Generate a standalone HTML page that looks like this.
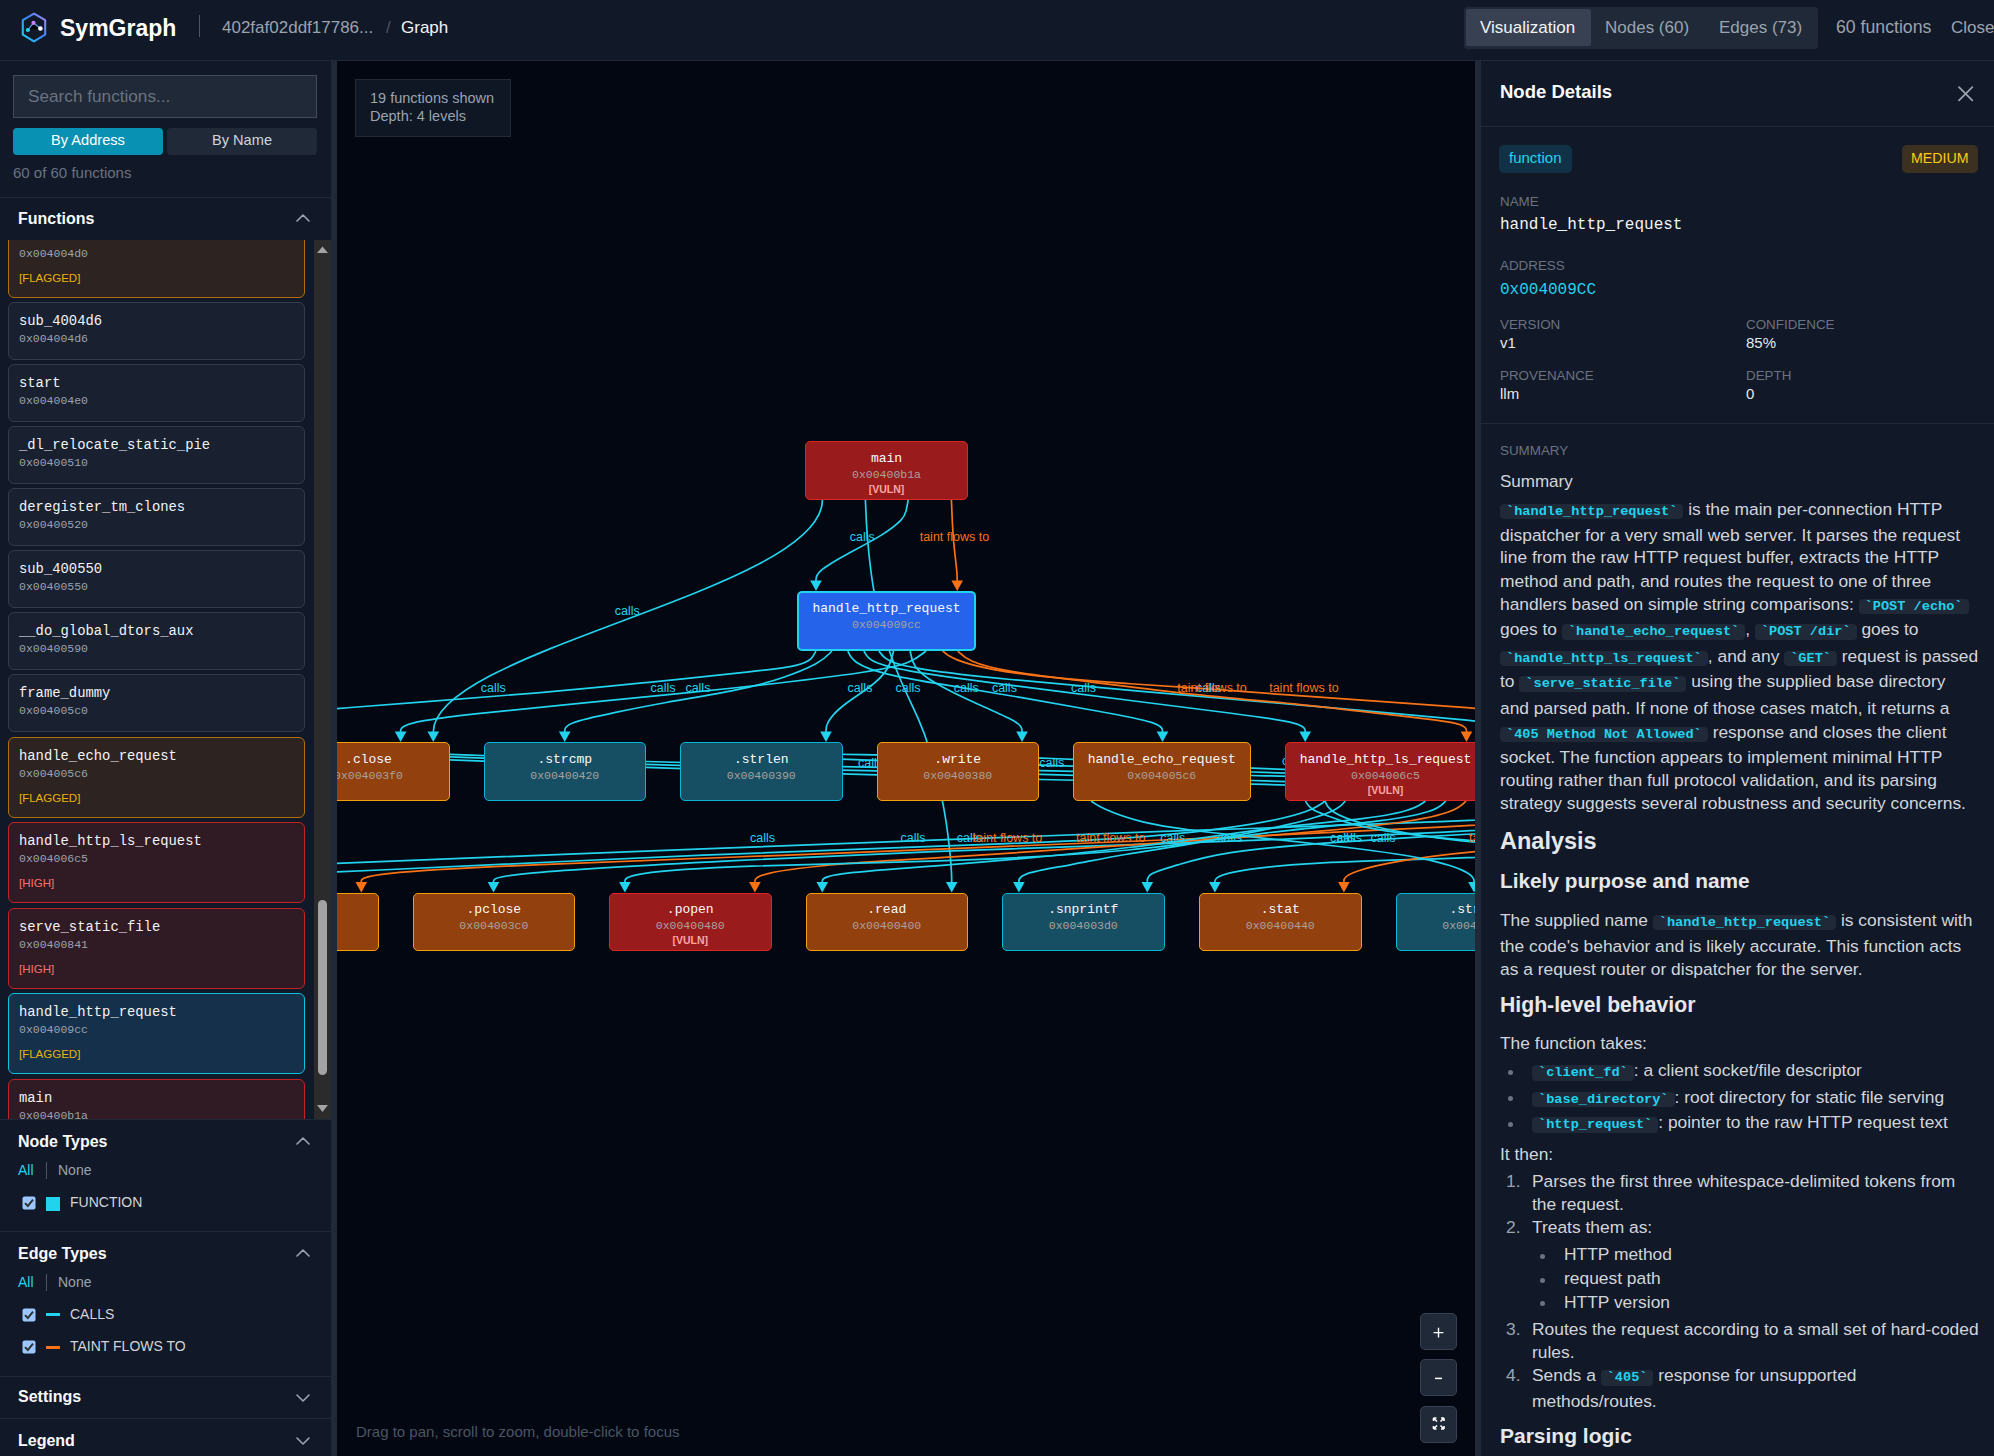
<!DOCTYPE html>
<html><head><meta charset="utf-8"><title>SymGraph</title>
<style>
html,body{margin:0;padding:0;width:1994px;height:1456px;overflow:hidden;background:#111827;}
.t{position:absolute;white-space:nowrap;}
.r{position:absolute;}
</style></head><body>
<div class="r" style="left:0px;top:0px;width:1994px;height:60px;background:#111827;"></div>
<div class="r" style="left:0px;top:60px;width:1994px;height:1px;background:#1f2937;"></div>
<div class="r" style="left:0px;top:61px;width:331px;height:1395px;background:#111827;"></div>
<div class="r" style="left:331px;top:61px;width:6px;height:1395px;background:#1f2937;"></div>
<div class="r" style="left:337px;top:61px;width:1138px;height:1395px;background:#030712;"></div>
<div class="r" style="left:1475px;top:61px;width:6px;height:1395px;background:#1f2937;"></div>
<div class="r" style="left:1481px;top:61px;width:513px;height:1395px;background:#111827;"></div>
<svg class="r" style="left:18px;top:10px;width:32px;height:36px" viewBox="18 10 32 36">
<defs><linearGradient id="lg" x1="0" y1="1" x2="1" y2="0"><stop offset="0" stop-color="#22d3ee"/><stop offset="0.55" stop-color="#3b82f6"/><stop offset="1" stop-color="#a78bfa"/></linearGradient></defs>
<path d="M34 13.6 L45.2 20.2 L45.2 34.6 L34 41.4 L22.8 34.6 L22.8 20.2 Z" fill="none" stroke="url(#lg)" stroke-width="2.1" stroke-linejoin="round"/>
<path d="M27.9 30 L33.5 22.8 L40.4 28.5 Z" fill="#000" opacity="0.9"/>
<path d="M27.9 30 L33.5 22.8 L40.4 28.5" fill="none" stroke="#60a5fa" stroke-width="1.1"/>
<circle cx="33.5" cy="22.8" r="2.1" fill="#c084fc"/>
<circle cx="27.9" cy="30" r="2.1" fill="#22d3ee"/>
<circle cx="40.4" cy="28.5" r="2.3" fill="#ffffff"/>
</svg>
<div class="t" style="left:60px;top:14px;font-size:23px;line-height:28px;color:#ffffff;font-family:'Liberation Sans', sans-serif;font-weight:700;">SymGraph</div>
<div class="r" style="left:199px;top:15px;width:1px;height:22px;background:#4b5563;"></div>
<div class="t" style="left:222px;top:17px;font-size:17px;line-height:22px;color:#9ca3af;font-family:'Liberation Sans', sans-serif;">402faf02ddf17786...</div>
<div class="t" style="left:386px;top:17px;font-size:17px;line-height:22px;color:#4b5563;font-family:'Liberation Sans', sans-serif;">/</div>
<div class="t" style="left:401px;top:17px;font-size:17px;line-height:22px;color:#f3f4f6;font-family:'Liberation Sans', sans-serif;">Graph</div>
<div class="r" style="left:1464px;top:7px;width:354px;height:42px;background:#1f2937;border-radius:3px;"></div>
<div class="r" style="left:1466px;top:9px;width:125px;height:37px;background:#374151;border-radius:2px;"></div>
<div class="t" style="left:1480px;top:17px;font-size:17px;line-height:22px;color:#f3f4f6;font-family:'Liberation Sans', sans-serif;">Visualization</div>
<div class="t" style="left:1605px;top:17px;font-size:17px;line-height:22px;color:#9ca3af;font-family:'Liberation Sans', sans-serif;">Nodes (60)</div>
<div class="t" style="left:1719px;top:17px;font-size:17px;line-height:22px;color:#9ca3af;font-family:'Liberation Sans', sans-serif;">Edges (73)</div>
<div class="t" style="left:1836px;top:16px;font-size:17.7px;line-height:22px;color:#9ca3af;font-family:'Liberation Sans', sans-serif;">60 functions</div>
<div class="t" style="left:1951px;top:17px;font-size:17px;line-height:22px;color:#9ca3af;font-family:'Liberation Sans', sans-serif;">Close</div>
<div class="r" style="left:13px;top:75px;width:304px;height:43px;background:#1f2937;border:1px solid #424b59;box-sizing:border-box;"></div>
<div class="t" style="left:28px;top:85px;font-size:17.2px;line-height:22px;color:#6b7280;font-family:'Liberation Sans', sans-serif;">Search functions...</div>
<div class="r" style="left:13px;top:128px;width:150px;height:27px;background:#0891b2;border-radius:4px;"></div>
<div class="t" style="left:13px;top:131px;font-size:14.6px;line-height:18px;color:#ffffff;font-family:'Liberation Sans', sans-serif;width:150px;text-align:center;">By Address</div>
<div class="r" style="left:167px;top:128px;width:150px;height:27px;background:#1f2937;border-radius:4px;"></div>
<div class="t" style="left:167px;top:131px;font-size:14.6px;line-height:18px;color:#d1d5db;font-family:'Liberation Sans', sans-serif;width:150px;text-align:center;">By Name</div>
<div class="t" style="left:13px;top:163px;font-size:15px;line-height:19px;color:#6b7280;font-family:'Liberation Sans', sans-serif;">60 of 60 functions</div>
<div class="r" style="left:0px;top:197px;width:331px;height:1px;background:#1f2937;"></div>
<div class="t" style="left:18px;top:209px;font-size:16px;line-height:20px;color:#f9fafb;font-family:'Liberation Sans', sans-serif;font-weight:700;">Functions</div>
<svg class="r" style="left:296px;top:214px;width:14px;height:8px" viewBox="0 0 14 8"><path d="M1 7 L7 1 L13 7" fill="none" stroke="#9ca3af" stroke-width="1.6" stroke-linecap="round" stroke-linejoin="round"/></svg>
<div class="r" style="left:0;top:240px;width:314px;height:879px;overflow:hidden"><div class="r" style="left:8px;top:-23px;width:297px;height:81px;background:#2d2321;border:1px solid #b26e0d;border-radius:6px;box-sizing:border-box;"></div><div class="t" style="left:19px;top:6px;font-size:11.5px;line-height:15px;color:#9ca3af;font-family:'Liberation Mono', monospace;">0x004004d0</div><div class="t" style="left:19px;top:31px;font-size:11.5px;line-height:15px;color:#eab308;font-family:'Liberation Sans', sans-serif;">[FLAGGED]</div><div class="r" style="left:8px;top:62px;width:297px;height:58px;background:#192030;border:1px solid #323c4c;border-radius:6px;box-sizing:border-box;"></div><div class="t" style="left:19px;top:71px;font-size:13.85px;line-height:20px;color:#f3f4f6;font-family:'Liberation Mono', monospace;">sub_4004d6</div><div class="t" style="left:19px;top:91px;font-size:11.5px;line-height:15px;color:#9ca3af;font-family:'Liberation Mono', monospace;">0x004004d6</div><div class="r" style="left:8px;top:124px;width:297px;height:58px;background:#192030;border:1px solid #323c4c;border-radius:6px;box-sizing:border-box;"></div><div class="t" style="left:19px;top:133px;font-size:13.85px;line-height:20px;color:#f3f4f6;font-family:'Liberation Mono', monospace;">start</div><div class="t" style="left:19px;top:153px;font-size:11.5px;line-height:15px;color:#9ca3af;font-family:'Liberation Mono', monospace;">0x004004e0</div><div class="r" style="left:8px;top:186px;width:297px;height:58px;background:#192030;border:1px solid #323c4c;border-radius:6px;box-sizing:border-box;"></div><div class="t" style="left:19px;top:195px;font-size:13.85px;line-height:20px;color:#f3f4f6;font-family:'Liberation Mono', monospace;">_dl_relocate_static_pie</div><div class="t" style="left:19px;top:215px;font-size:11.5px;line-height:15px;color:#9ca3af;font-family:'Liberation Mono', monospace;">0x00400510</div><div class="r" style="left:8px;top:248px;width:297px;height:58px;background:#192030;border:1px solid #323c4c;border-radius:6px;box-sizing:border-box;"></div><div class="t" style="left:19px;top:257px;font-size:13.85px;line-height:20px;color:#f3f4f6;font-family:'Liberation Mono', monospace;">deregister_tm_clones</div><div class="t" style="left:19px;top:277px;font-size:11.5px;line-height:15px;color:#9ca3af;font-family:'Liberation Mono', monospace;">0x00400520</div><div class="r" style="left:8px;top:310px;width:297px;height:58px;background:#192030;border:1px solid #323c4c;border-radius:6px;box-sizing:border-box;"></div><div class="t" style="left:19px;top:319px;font-size:13.85px;line-height:20px;color:#f3f4f6;font-family:'Liberation Mono', monospace;">sub_400550</div><div class="t" style="left:19px;top:339px;font-size:11.5px;line-height:15px;color:#9ca3af;font-family:'Liberation Mono', monospace;">0x00400550</div><div class="r" style="left:8px;top:372px;width:297px;height:58px;background:#192030;border:1px solid #323c4c;border-radius:6px;box-sizing:border-box;"></div><div class="t" style="left:19px;top:381px;font-size:13.85px;line-height:20px;color:#f3f4f6;font-family:'Liberation Mono', monospace;">__do_global_dtors_aux</div><div class="t" style="left:19px;top:401px;font-size:11.5px;line-height:15px;color:#9ca3af;font-family:'Liberation Mono', monospace;">0x00400590</div><div class="r" style="left:8px;top:434px;width:297px;height:58px;background:#192030;border:1px solid #323c4c;border-radius:6px;box-sizing:border-box;"></div><div class="t" style="left:19px;top:443px;font-size:13.85px;line-height:20px;color:#f3f4f6;font-family:'Liberation Mono', monospace;">frame_dummy</div><div class="t" style="left:19px;top:463px;font-size:11.5px;line-height:15px;color:#9ca3af;font-family:'Liberation Mono', monospace;">0x004005c0</div><div class="r" style="left:8px;top:497px;width:297px;height:81px;background:#2d2321;border:1px solid #b26e0d;border-radius:6px;box-sizing:border-box;"></div><div class="t" style="left:19px;top:506px;font-size:13.85px;line-height:20px;color:#f3f4f6;font-family:'Liberation Mono', monospace;">handle_echo_request</div><div class="t" style="left:19px;top:526px;font-size:11.5px;line-height:15px;color:#9ca3af;font-family:'Liberation Mono', monospace;">0x004005c6</div><div class="t" style="left:19px;top:551px;font-size:11.5px;line-height:15px;color:#eab308;font-family:'Liberation Sans', sans-serif;">[FLAGGED]</div><div class="r" style="left:8px;top:582px;width:297px;height:81px;background:#301a24;border:1px solid #c02424;border-radius:6px;box-sizing:border-box;"></div><div class="t" style="left:19px;top:591px;font-size:13.85px;line-height:20px;color:#f3f4f6;font-family:'Liberation Mono', monospace;">handle_http_ls_request</div><div class="t" style="left:19px;top:611px;font-size:11.5px;line-height:15px;color:#9ca3af;font-family:'Liberation Mono', monospace;">0x004006c5</div><div class="t" style="left:19px;top:636px;font-size:11.5px;line-height:15px;color:#f87171;font-family:'Liberation Sans', sans-serif;">[HIGH]</div><div class="r" style="left:8px;top:668px;width:297px;height:81px;background:#301a24;border:1px solid #c02424;border-radius:6px;box-sizing:border-box;"></div><div class="t" style="left:19px;top:677px;font-size:13.85px;line-height:20px;color:#f3f4f6;font-family:'Liberation Mono', monospace;">serve_static_file</div><div class="t" style="left:19px;top:697px;font-size:11.5px;line-height:15px;color:#9ca3af;font-family:'Liberation Mono', monospace;">0x00400841</div><div class="t" style="left:19px;top:722px;font-size:11.5px;line-height:15px;color:#f87171;font-family:'Liberation Sans', sans-serif;">[HIGH]</div><div class="r" style="left:8px;top:753px;width:297px;height:81px;background:#14304a;border:1px solid #0ec3e0;border-radius:6px;box-sizing:border-box;"></div><div class="t" style="left:19px;top:762px;font-size:13.85px;line-height:20px;color:#f3f4f6;font-family:'Liberation Mono', monospace;">handle_http_request</div><div class="t" style="left:19px;top:782px;font-size:11.5px;line-height:15px;color:#9ca3af;font-family:'Liberation Mono', monospace;">0x004009cc</div><div class="t" style="left:19px;top:807px;font-size:11.5px;line-height:15px;color:#eab308;font-family:'Liberation Sans', sans-serif;">[FLAGGED]</div><div class="r" style="left:8px;top:839px;width:297px;height:81px;background:#301a24;border:1px solid #c02424;border-radius:6px;box-sizing:border-box;"></div><div class="t" style="left:19px;top:848px;font-size:13.85px;line-height:20px;color:#f3f4f6;font-family:'Liberation Mono', monospace;">main</div><div class="t" style="left:19px;top:868px;font-size:11.5px;line-height:15px;color:#9ca3af;font-family:'Liberation Mono', monospace;">0x00400b1a</div><div class="t" style="left:19px;top:893px;font-size:11.5px;line-height:15px;color:#f87171;font-family:'Liberation Sans', sans-serif;">[HIGH]</div></div>
<div class="r" style="left:314px;top:240px;width:17px;height:879px;background:#2b2b2b;"></div>
<svg class="r" style="left:314px;top:240px;width:17px;height:879px" viewBox="0 0 17 879"><path d="M3 13 L8.5 6.6 L14 13 Z" fill="#a3a3a3"/><path d="M3 865 L8.5 872 L14 865 Z" fill="#a3a3a3"/><rect x="4" y="660" width="9" height="175" rx="4.5" fill="#a3a3a3"/></svg>
<div class="r" style="left:0px;top:1119px;width:331px;height:1px;background:#1f2937;"></div>
<div class="t" style="left:18px;top:1132px;font-size:16px;line-height:20px;color:#f9fafb;font-family:'Liberation Sans', sans-serif;font-weight:700;">Node Types</div>
<svg class="r" style="left:296px;top:1137px;width:14px;height:8px" viewBox="0 0 14 8"><path d="M1 7 L7 1 L13 7" fill="none" stroke="#9ca3af" stroke-width="1.6" stroke-linecap="round" stroke-linejoin="round"/></svg>
<div class="t" style="left:18px;top:1161px;font-size:14px;line-height:18px;color:#22d3ee;font-family:'Liberation Sans', sans-serif;">All</div>
<div class="r" style="left:46px;top:1162px;width:1px;height:17px;background:#4b5563;"></div>
<div class="t" style="left:58px;top:1161px;font-size:14px;line-height:18px;color:#9ca3af;font-family:'Liberation Sans', sans-serif;">None</div>
<svg class="r" style="left:22px;top:1196px;width:14px;height:14px" viewBox="0 0 14 14"><rect x="0.5" y="0.5" width="13" height="13" rx="2" fill="#9cc7fc"/><path d="M3 7.2 L5.8 10 L11 3.6" fill="none" stroke="#2f2f2f" stroke-width="1.9"/></svg>
<div class="r" style="left:46px;top:1197px;width:14px;height:14px;background:#22d3ee;"></div>
<div class="t" style="left:70px;top:1193px;font-size:14px;line-height:18px;color:#d1d5db;font-family:'Liberation Sans', sans-serif;">FUNCTION</div>
<div class="r" style="left:0px;top:1231px;width:331px;height:1px;background:#1f2937;"></div>
<div class="t" style="left:18px;top:1244px;font-size:16px;line-height:20px;color:#f9fafb;font-family:'Liberation Sans', sans-serif;font-weight:700;">Edge Types</div>
<svg class="r" style="left:296px;top:1249px;width:14px;height:8px" viewBox="0 0 14 8"><path d="M1 7 L7 1 L13 7" fill="none" stroke="#9ca3af" stroke-width="1.6" stroke-linecap="round" stroke-linejoin="round"/></svg>
<div class="t" style="left:18px;top:1273px;font-size:14px;line-height:18px;color:#22d3ee;font-family:'Liberation Sans', sans-serif;">All</div>
<div class="r" style="left:46px;top:1274px;width:1px;height:17px;background:#4b5563;"></div>
<div class="t" style="left:58px;top:1273px;font-size:14px;line-height:18px;color:#9ca3af;font-family:'Liberation Sans', sans-serif;">None</div>
<svg class="r" style="left:22px;top:1308px;width:14px;height:14px" viewBox="0 0 14 14"><rect x="0.5" y="0.5" width="13" height="13" rx="2" fill="#9cc7fc"/><path d="M3 7.2 L5.8 10 L11 3.6" fill="none" stroke="#2f2f2f" stroke-width="1.9"/></svg>
<div class="r" style="left:46px;top:1313px;width:14px;height:3px;background:#22d3ee;"></div>
<div class="t" style="left:70px;top:1305px;font-size:14px;line-height:18px;color:#d1d5db;font-family:'Liberation Sans', sans-serif;">CALLS</div>
<svg class="r" style="left:22px;top:1340px;width:14px;height:14px" viewBox="0 0 14 14"><rect x="0.5" y="0.5" width="13" height="13" rx="2" fill="#9cc7fc"/><path d="M3 7.2 L5.8 10 L11 3.6" fill="none" stroke="#2f2f2f" stroke-width="1.9"/></svg>
<div class="r" style="left:46px;top:1346px;width:14px;height:3px;background:#f97316;"></div>
<div class="t" style="left:70px;top:1337px;font-size:14px;line-height:18px;color:#d1d5db;font-family:'Liberation Sans', sans-serif;">TAINT FLOWS TO</div>
<div class="r" style="left:0px;top:1376px;width:331px;height:1px;background:#1f2937;"></div>
<div class="t" style="left:18px;top:1387px;font-size:16px;line-height:20px;color:#f9fafb;font-family:'Liberation Sans', sans-serif;font-weight:700;">Settings</div>
<svg class="r" style="left:296px;top:1394px;width:14px;height:8px" viewBox="0 0 14 8"><path d="M1 1 L7 7 L13 1" fill="none" stroke="#9ca3af" stroke-width="1.6" stroke-linecap="round" stroke-linejoin="round"/></svg>
<div class="r" style="left:0px;top:1418px;width:331px;height:1px;background:#1f2937;"></div>
<div class="t" style="left:18px;top:1431px;font-size:16px;line-height:20px;color:#f9fafb;font-family:'Liberation Sans', sans-serif;font-weight:700;">Legend</div>
<svg class="r" style="left:296px;top:1437px;width:14px;height:8px" viewBox="0 0 14 8"><path d="M1 1 L7 7 L13 1" fill="none" stroke="#9ca3af" stroke-width="1.6" stroke-linecap="round" stroke-linejoin="round"/></svg>
<div class="r" style="left:337px;top:61px;width:1138px;height:1395px;overflow:hidden"><svg class="r" style="left:0;top:0;width:1138px;height:1395px" viewBox="337 61 1138 1395"><path d="M822.4,500 C822,590 433.3,650 433.3,732" fill="none" stroke="#22d3ee" stroke-width="1.7"/><path d="M427.5,731.5 L439.1,731.5 L433.3,742.0 Z" fill="#22d3ee"/><path d="M865.4,500.0 L865.7,506.7 C865.9,513.3 866.5,526.7 867.8,541.8 C869.1,557.0 871.1,574.0 873.3,587.3 C875.5,600.7 877.7,610.3 880.4,620.3 C883.0,630.3 886.0,640.7 889.3,650.7 C892.7,660.7 896.3,670.3 901.7,682.5 C907.0,694.7 914.0,709.3 918.6,719.7 C923.2,730.0 925.5,736.0 929.2,748.8 C933.0,761.7 938.4,781.3 942.1,799.3 C945.8,817.3 947.9,833.7 949.2,845.8 C950.6,857.8 951.1,865.7 951.4,871.1 C951.7,876.5 951.7,879.5 951.7,881.0 L951.7,882.5" fill="none" stroke="#22d3ee" stroke-width="1.7"/><path d="M945.9,882.0 L957.5,882.0 L951.7,892.5 Z" fill="#22d3ee"/><path d="M908.2,500.0 L907.8,502.0 C907.5,504.0 906.7,508.0 906.0,511.1 C905.2,514.2 904.5,516.3 900.9,520.1 C897.4,523.8 891.1,529.0 881.4,535.1 C871.6,541.1 858.5,548.0 847.0,554.2 C835.5,560.5 825.8,566.3 820.9,570.6 C816.0,575.0 816.0,578.0 816.0,579.5 L816.0,581.0" fill="none" stroke="#22d3ee" stroke-width="1.7"/><path d="M810.2,580.5 L821.8,580.5 L816.0,591.0 Z" fill="#22d3ee"/><path d="M951.4,500.0 L951.7,506.7 C951.9,513.3 952.5,526.7 953.4,538.7 C954.4,550.7 955.8,561.3 956.5,568.2 C957.2,575.0 957.2,578.0 957.2,579.5 L957.2,581.0" fill="none" stroke="#f97316" stroke-width="1.7"/><path d="M951.4,580.5 L963.0,580.5 L957.2,591.0 Z" fill="#f97316"/><path d="M815.8,651.0 L815.2,652.3 C814.5,653.7 813.3,656.3 810.8,658.8 C808.2,661.2 804.5,663.3 795.9,665.3 C787.3,667.3 774.0,669.2 748.9,671.9 C723.8,674.7 687.1,678.4 653.6,681.8 C620.2,685.2 590.1,688.4 537.7,692.8 C485.3,697.2 410.7,702.9 350.7,707.5 C290.7,712.1 245.3,715.5 222.7,717.3 L200.0,719.0" fill="none" stroke="#22d3ee" stroke-width="1.7"/><path d="M831.8,651.0 L830.0,653.0 C828.1,655.0 824.5,659.0 815.9,663.7 C807.4,668.3 794.1,673.7 780.7,678.2 C767.3,682.7 753.9,686.3 733.8,690.4 C713.8,694.4 687.0,698.8 666.4,702.5 C645.9,706.1 631.4,709.1 615.5,712.4 C599.6,715.7 582.1,719.3 573.4,722.7 C564.7,726.0 564.7,729.0 564.7,730.5 L564.7,732.0" fill="none" stroke="#22d3ee" stroke-width="1.7"/><path d="M558.9,731.5 L570.5,731.5 L564.7,742.0 Z" fill="#22d3ee"/><path d="M926.0,651.0 L923.5,653.0 C921.0,655.0 916.0,659.0 908.2,662.3 C900.3,665.7 889.7,668.3 861.2,672.5 C832.8,676.7 786.7,682.3 733.5,688.0 C680.3,693.7 620.2,699.5 576.8,703.6 C533.3,707.8 506.7,710.4 480.1,713.4 C453.5,716.3 427.1,719.7 413.8,722.8 C400.6,726.0 400.6,729.0 400.6,730.5 L400.6,732.0" fill="none" stroke="#22d3ee" stroke-width="1.7"/><path d="M394.8,731.5 L406.4,731.5 L400.6,742.0 Z" fill="#22d3ee"/><path d="M893.6,651.0 L892.8,654.2 C891.9,657.3 890.3,663.7 886.8,669.5 C883.2,675.3 877.9,680.7 869.8,686.7 C861.8,692.7 851.1,699.3 843.4,705.5 C835.6,711.7 830.8,717.3 828.4,721.7 C826.0,726.0 826.0,729.0 826.0,730.5 L826.0,732.0" fill="none" stroke="#22d3ee" stroke-width="1.7"/><path d="M820.2,731.5 L831.8,731.5 L826.0,742.0 Z" fill="#22d3ee"/><path d="M910.2,651.0 L910.6,653.5 C911.0,656.0 911.8,661.0 915.2,666.2 C918.6,671.3 924.7,676.7 936.0,683.3 C947.4,690.0 964.1,698.0 979.3,704.8 C994.5,711.7 1008.3,717.3 1015.1,721.7 C1022.0,726.0 1022.0,729.0 1022.0,730.5 L1022.0,732.0" fill="none" stroke="#22d3ee" stroke-width="1.7"/><path d="M1016.2,731.5 L1027.8,731.5 L1022.0,742.0 Z" fill="#22d3ee"/><path d="M847.9,651.0 L848.7,652.8 C849.4,654.7 851.0,658.3 856.4,662.2 C861.8,666.0 871.2,670.0 886.6,673.8 C902.0,677.7 923.5,681.3 946.8,685.2 C970.1,689.1 995.3,693.1 1020.4,697.4 C1045.5,701.7 1070.5,706.2 1094.2,710.5 C1117.9,714.8 1140.2,718.9 1151.4,722.4 C1162.5,726.0 1162.5,729.0 1162.5,730.5 L1162.5,732.0" fill="none" stroke="#22d3ee" stroke-width="1.7"/><path d="M1156.7,731.5 L1168.3,731.5 L1162.5,742.0 Z" fill="#22d3ee"/><path d="M863.9,651.0 L864.8,652.7 C865.6,654.3 867.3,657.7 872.8,660.8 C878.3,664.0 887.7,667.0 909.5,670.8 C931.3,674.7 965.7,679.3 1007.8,684.8 C1050.0,690.3 1100.0,696.7 1138.3,701.5 C1176.7,706.3 1203.3,709.7 1229.2,713.0 C1255.1,716.3 1280.1,719.7 1292.7,722.8 C1305.2,726.0 1305.2,729.0 1305.2,730.5 L1305.2,732.0" fill="none" stroke="#22d3ee" stroke-width="1.7"/><path d="M1299.4,731.5 L1311.0,731.5 L1305.2,742.0 Z" fill="#22d3ee"/><path d="M879.0,651.0 L880.2,652.7 C881.3,654.3 883.7,657.7 889.7,660.7 C895.7,663.7 905.3,666.3 924.3,669.3 C943.3,672.3 971.7,675.7 1010.8,679.5 C1050.0,683.4 1100.0,687.8 1150.0,692.1 C1200.0,696.5 1250.0,700.7 1304.2,705.4 C1358.3,710.1 1416.7,715.2 1466.7,720.2 C1516.7,725.2 1558.3,730.1 1579.2,732.6 L1600.0,735.0" fill="none" stroke="#22d3ee" stroke-width="1.7"/><path d="M942.7,651.0 L944.4,652.4 C946.0,653.9 949.4,656.7 957.3,659.9 C965.2,663.1 977.8,666.6 994.0,669.6 C1010.3,672.6 1030.4,675.1 1052.9,677.4 C1075.5,679.6 1100.6,681.6 1125.5,683.4 C1150.5,685.1 1175.2,686.6 1204.3,688.7 C1233.3,690.7 1266.7,693.4 1312.5,696.7 C1358.3,700.0 1416.7,704.0 1466.7,707.7 C1516.7,711.3 1558.3,714.7 1579.2,716.3 L1600.0,718.0" fill="none" stroke="#f97316" stroke-width="1.7"/><path d="M957.8,651.0 L959.4,652.7 C961.1,654.4 964.4,657.7 972.3,661.2 C980.2,664.6 992.8,668.1 1011.6,671.4 C1030.4,674.6 1055.4,677.6 1087.9,681.6 C1120.3,685.6 1160.2,690.7 1196.8,694.6 C1233.3,698.5 1266.7,701.2 1300.0,704.6 C1333.3,708.0 1366.7,712.0 1394.4,715.2 C1422.2,718.3 1444.3,720.7 1455.4,723.3 C1466.5,726.0 1466.5,729.0 1466.5,730.5 L1466.5,732.0" fill="none" stroke="#f97316" stroke-width="1.7"/><path d="M1460.7,731.5 L1472.3,731.5 L1466.5,742.0 Z" fill="#f97316"/><path d="M337.0,750.5 L355.8,751.1 C374.7,751.7 412.3,752.9 463.8,754.8 C515.3,756.7 580.7,759.4 646.0,761.5 C711.3,763.6 776.7,765.1 842.2,766.6 C907.7,768.0 973.3,769.3 1041.3,770.7 C1109.3,772.2 1179.7,773.7 1252.3,775.5 C1325.0,777.2 1400.0,779.1 1437.5,780.1 L1475.0,781.0" fill="none" stroke="#22d3ee" stroke-width="1.7"/><path d="M337.0,753.0 L355.8,753.6 C374.7,754.2 412.3,755.5 463.8,757.4 C515.3,759.3 580.7,762.0 646.0,764.3 C711.3,766.6 776.7,768.6 842.2,770.1 C907.7,771.7 973.3,772.8 1041.3,774.4 C1109.3,776.1 1179.7,778.3 1252.3,780.5 C1325.0,782.7 1400.0,784.8 1437.5,785.9 L1475.0,787.0" fill="none" stroke="#22d3ee" stroke-width="1.7"/><path d="M337.0,756.0 L355.8,756.6 C374.7,757.2 412.3,758.4 463.8,760.4 C515.3,762.3 580.7,765.1 646.0,767.4 C711.3,769.8 776.7,771.9 842.2,773.9 C907.7,775.9 973.3,777.8 1041.3,779.5 C1109.3,781.1 1179.7,782.4 1252.3,784.1 C1325.0,785.8 1400.0,787.9 1437.5,788.9 L1475.0,790.0" fill="none" stroke="#22d3ee" stroke-width="1.7"/><path d="M760.0,752.0 L773.7,752.5 C787.3,753.0 814.7,754.0 861.2,754.7 C907.7,755.4 973.3,755.9 1041.3,758.2 C1109.3,760.5 1179.7,764.8 1252.3,768.1 C1325.0,771.3 1400.0,773.7 1437.5,774.8 L1475.0,776.0" fill="none" stroke="#22d3ee" stroke-width="1.7"/><path d="M760.0,756.0 L773.7,756.6 C787.3,757.2 814.7,758.4 861.2,759.9 C907.7,761.3 973.3,763.1 1041.3,765.1 C1109.3,767.2 1179.7,769.6 1252.3,772.0 C1325.0,774.3 1400.0,776.7 1437.5,777.8 L1475.0,779.0" fill="none" stroke="#22d3ee" stroke-width="1.7"/><path d="M1600.0,812.0 L1579.2,813.6 C1558.3,815.2 1516.7,818.5 1440.0,821.7 C1363.3,825.0 1251.7,828.3 1162.5,831.4 C1073.3,834.4 1006.7,837.3 939.3,839.9 C872.0,842.6 804.0,845.1 703.3,848.9 C602.7,852.8 469.3,858.0 380.0,861.6 C290.7,865.1 245.3,867.1 222.7,868.0 L200.0,869.0" fill="none" stroke="#22d3ee" stroke-width="1.7"/><path d="M1324.9,801.0 L1322.8,802.7 C1320.6,804.3 1316.3,807.7 1305.8,811.5 C1295.3,815.3 1278.7,819.7 1250.0,824.4 C1221.3,829.0 1180.7,834.1 1127.0,837.8 C1073.3,841.4 1006.7,843.8 939.3,846.1 C872.0,848.5 804.0,850.8 703.3,855.2 C602.7,859.5 469.3,865.9 380.0,870.0 C290.7,874.1 245.3,876.1 222.7,877.0 L200.0,878.0" fill="none" stroke="#22d3ee" stroke-width="1.7"/><path d="M1600.0,816.0 L1579.2,817.7 C1558.3,819.5 1516.7,822.9 1440.0,827.1 C1363.3,831.3 1251.7,836.2 1162.5,840.0 C1073.3,843.8 1006.7,846.4 939.3,849.1 C872.0,851.8 804.0,854.5 736.8,857.0 C669.5,859.5 603.1,861.9 540.6,864.6 C478.2,867.3 419.7,870.4 390.5,873.4 C361.3,876.5 361.3,879.5 361.3,881.0 L361.3,882.5" fill="none" stroke="#f97316" stroke-width="1.7"/><path d="M355.5,882.0 L367.1,882.0 L361.3,892.5 Z" fill="#f97316"/><path d="M1600.0,822.0 L1579.2,823.6 C1558.3,825.2 1516.7,828.5 1440.0,832.3 C1363.3,836.1 1251.7,840.6 1162.5,843.7 C1073.3,846.9 1006.7,848.7 939.3,851.3 C872.0,853.8 804.0,857.0 729.6,860.8 C655.2,864.6 574.3,869.1 533.9,872.8 C493.5,876.5 493.5,879.5 493.5,881.0 L493.5,882.5" fill="none" stroke="#22d3ee" stroke-width="1.7"/><path d="M487.7,882.0 L499.3,882.0 L493.5,892.5 Z" fill="#22d3ee"/><path d="M1466.0,801.0 L1464.2,802.8 C1462.3,804.7 1458.7,808.3 1447.7,812.2 C1436.7,816.0 1418.3,820.0 1387.5,824.0 C1356.7,828.0 1313.3,831.9 1270.0,835.3 C1226.7,838.6 1183.3,841.4 1128.3,845.1 C1073.3,848.8 1006.7,853.4 956.7,856.6 C906.8,859.8 873.5,861.4 842.7,864.0 C811.8,866.6 783.4,870.0 769.1,873.3 C754.9,876.5 754.9,879.5 754.9,881.0 L754.9,882.5" fill="none" stroke="#f97316" stroke-width="1.7"/><path d="M749.1,882.0 L760.7,882.0 L754.9,892.5 Z" fill="#f97316"/><path d="M1445.7,801.0 L1443.9,802.8 C1442.1,804.7 1438.6,808.3 1427.6,811.8 C1416.7,815.3 1398.3,818.7 1370.8,821.8 C1343.3,825.0 1306.7,828.0 1266.7,832.9 C1226.7,837.9 1183.3,844.8 1128.3,850.0 C1073.3,855.1 1006.7,858.6 939.3,860.8 C872.0,863.1 804.0,864.1 751.5,866.1 C699.0,868.0 661.9,870.7 643.4,873.6 C624.9,876.5 624.9,879.5 624.9,881.0 L624.9,882.5" fill="none" stroke="#22d3ee" stroke-width="1.7"/><path d="M619.1,882.0 L630.7,882.0 L624.9,892.5 Z" fill="#22d3ee"/><path d="M1425.4,801.0 L1423.2,802.7 C1420.9,804.3 1416.5,807.7 1405.6,810.8 C1394.7,814.0 1377.3,817.0 1353.7,819.7 C1330.0,822.3 1300.0,824.7 1263.3,829.3 C1226.7,834.0 1183.3,841.0 1128.3,847.5 C1073.3,854.1 1006.7,860.1 953.7,864.4 C900.8,868.6 861.5,871.1 841.9,873.8 C822.3,876.5 822.3,879.5 822.3,881.0 L822.3,882.5" fill="none" stroke="#22d3ee" stroke-width="1.7"/><path d="M816.5,882.0 L828.1,882.0 L822.3,892.5 Z" fill="#22d3ee"/><path d="M1345.2,801.0 L1344.0,802.5 C1342.8,804.0 1340.4,807.0 1332.9,810.7 C1325.3,814.3 1312.7,818.7 1289.7,824.2 C1266.7,829.7 1233.3,836.3 1203.4,841.6 C1173.5,846.9 1147.0,850.8 1125.4,854.5 C1103.8,858.2 1087.1,861.7 1070.2,864.8 C1053.2,868.0 1036.1,870.7 1027.5,873.6 C1018.9,876.5 1018.9,879.5 1018.9,881.0 L1018.9,882.5" fill="none" stroke="#22d3ee" stroke-width="1.7"/><path d="M1013.1,882.0 L1024.7,882.0 L1018.9,892.5 Z" fill="#22d3ee"/><path d="M1600.0,826.0 L1579.2,827.3 C1558.3,828.7 1516.7,831.3 1471.7,834.0 C1426.7,836.7 1378.3,839.3 1335.8,842.3 C1293.3,845.3 1256.7,848.7 1230.8,852.7 C1205.0,856.7 1190.0,861.3 1177.9,864.9 C1165.8,868.5 1156.5,871.0 1151.9,873.8 C1147.3,876.5 1147.3,879.5 1147.3,881.0 L1147.3,882.5" fill="none" stroke="#22d3ee" stroke-width="1.7"/><path d="M1141.5,882.0 L1153.1,882.0 L1147.3,892.5 Z" fill="#22d3ee"/><path d="M1305.5,801.0 L1306.2,802.3 C1307.0,803.7 1308.5,806.3 1311.8,808.7 C1315.0,811.0 1320.0,813.0 1327.3,815.7 C1334.7,818.5 1344.3,821.9 1356.2,824.9 C1368.0,827.9 1382.0,830.3 1396.3,832.4 C1410.7,834.5 1425.3,836.3 1438.5,837.7 C1451.7,839.1 1463.3,840.1 1490.0,842.1 C1516.7,844.1 1558.3,847.1 1579.2,848.5 L1600.0,850.0" fill="none" stroke="#22d3ee" stroke-width="1.7"/><path d="M1600.0,850.0 L1579.2,851.4 C1558.3,852.9 1516.7,855.7 1466.7,857.7 C1416.7,859.7 1358.3,860.9 1315.0,863.4 C1271.6,865.8 1243.3,869.7 1229.1,873.1 C1214.9,876.5 1214.9,879.5 1214.9,881.0 L1214.9,882.5" fill="none" stroke="#22d3ee" stroke-width="1.7"/><path d="M1209.1,882.0 L1220.7,882.0 L1214.9,892.5 Z" fill="#22d3ee"/><path d="M1600.0,842.0 L1579.2,843.4 C1558.3,844.9 1516.7,847.8 1483.3,850.8 C1450.0,853.8 1425.0,856.9 1403.1,860.7 C1381.3,864.5 1362.6,869.0 1353.2,872.8 C1343.9,876.5 1343.9,879.5 1343.9,881.0 L1343.9,882.5" fill="none" stroke="#f97316" stroke-width="1.7"/><path d="M1338.1,882.0 L1349.7,882.0 L1343.9,892.5 Z" fill="#f97316"/><path d="M1091.3,801.0 L1092.8,802.2 C1094.4,803.3 1097.4,805.7 1105.5,809.3 C1113.7,813.0 1126.8,818.0 1142.9,821.9 C1159.0,825.9 1178.0,828.7 1211.2,832.5 C1244.3,836.3 1291.7,841.1 1330.5,845.5 C1369.3,849.9 1399.7,853.9 1422.2,858.6 C1444.7,863.2 1459.3,868.3 1466.7,872.4 C1474.0,876.5 1474.0,879.5 1474.0,881.0 L1474.0,882.5" fill="none" stroke="#22d3ee" stroke-width="1.7"/><path d="M1468.2,882.0 L1479.8,882.0 L1474.0,892.5 Z" fill="#22d3ee"/><path d="M1324.9,801.0 L1325.8,802.8 C1326.6,804.7 1328.3,808.3 1334.1,812.2 C1340.0,816.0 1350.0,820.0 1365.0,824.0 C1380.0,828.0 1400.0,832.0 1419.2,835.2 C1438.3,838.3 1456.7,840.7 1486.7,843.3 C1516.7,846.0 1558.3,849.0 1579.2,850.5 L1600.0,852.0" fill="none" stroke="#22d3ee" stroke-width="1.7"/></svg><div class="t" style="left:512.7px;top:467.8px;font-size:12.5px;line-height:16px;color:#22d3ee;font-family:'Liberation Sans', sans-serif;">calls</div><div class="t" style="left:582.7px;top:467.5px;font-size:12.5px;line-height:16px;color:#f97316;font-family:'Liberation Sans', sans-serif;">taint flows to</div><div class="t" style="left:277.8px;top:542.4px;font-size:12.5px;line-height:16px;color:#22d3ee;font-family:'Liberation Sans', sans-serif;">calls</div><div class="t" style="left:143.8px;top:618.5px;font-size:12.5px;line-height:16px;color:#22d3ee;font-family:'Liberation Sans', sans-serif;">calls</div><div class="t" style="left:313.5px;top:618.5px;font-size:12.5px;line-height:16px;color:#22d3ee;font-family:'Liberation Sans', sans-serif;">calls</div><div class="t" style="left:348.4px;top:618.5px;font-size:12.5px;line-height:16px;color:#22d3ee;font-family:'Liberation Sans', sans-serif;">calls</div><div class="t" style="left:510.4px;top:618.5px;font-size:12.5px;line-height:16px;color:#22d3ee;font-family:'Liberation Sans', sans-serif;">calls</div><div class="t" style="left:558.6px;top:618.5px;font-size:12.5px;line-height:16px;color:#22d3ee;font-family:'Liberation Sans', sans-serif;">calls</div><div class="t" style="left:616.8px;top:618.5px;font-size:12.5px;line-height:16px;color:#22d3ee;font-family:'Liberation Sans', sans-serif;">calls</div><div class="t" style="left:654.9px;top:618.5px;font-size:12.5px;line-height:16px;color:#22d3ee;font-family:'Liberation Sans', sans-serif;">calls</div><div class="t" style="left:734.1px;top:618.5px;font-size:12.5px;line-height:16px;color:#22d3ee;font-family:'Liberation Sans', sans-serif;">calls</div><div class="t" style="left:859px;top:618.5px;font-size:12.5px;line-height:16px;color:#22d3ee;font-family:'Liberation Sans', sans-serif;">calls</div><div class="t" style="left:840.3px;top:618.5px;font-size:12.5px;line-height:16px;color:#f97316;font-family:'Liberation Sans', sans-serif;">taint flows to</div><div class="t" style="left:932.2px;top:618.5px;font-size:12.5px;line-height:16px;color:#f97316;font-family:'Liberation Sans', sans-serif;">taint flows to</div><div class="t" style="left:521px;top:693.5px;font-size:12.5px;line-height:16px;color:#22d3ee;font-family:'Liberation Sans', sans-serif;">calls</div><div class="t" style="left:702.3px;top:693.5px;font-size:12.5px;line-height:16px;color:#22d3ee;font-family:'Liberation Sans', sans-serif;">calls</div><div class="t" style="left:945px;top:691.5px;font-size:12.5px;line-height:16px;color:#22d3ee;font-family:'Liberation Sans', sans-serif;">calls</div><div class="t" style="left:413.1px;top:768.7px;font-size:12.5px;line-height:16px;color:#22d3ee;font-family:'Liberation Sans', sans-serif;">calls</div><div class="t" style="left:563.5px;top:768.7px;font-size:12.5px;line-height:16px;color:#22d3ee;font-family:'Liberation Sans', sans-serif;">calls</div><div class="t" style="left:619.7px;top:768.7px;font-size:12.5px;line-height:16px;color:#22d3ee;font-family:'Liberation Sans', sans-serif;">calls</div><div class="t" style="left:635.8px;top:768.7px;font-size:12.5px;line-height:16px;color:#f97316;font-family:'Liberation Sans', sans-serif;">taint flows to</div><div class="t" style="left:739px;top:768.7px;font-size:12.5px;line-height:16px;color:#f97316;font-family:'Liberation Sans', sans-serif;">taint flows to</div><div class="t" style="left:823.3px;top:768.7px;font-size:12.5px;line-height:16px;color:#22d3ee;font-family:'Liberation Sans', sans-serif;">calls</div><div class="t" style="left:880.2px;top:768.7px;font-size:12.5px;line-height:16px;color:#22d3ee;font-family:'Liberation Sans', sans-serif;">calls</div><div class="t" style="left:993px;top:768.7px;font-size:12.5px;line-height:16px;color:#22d3ee;font-family:'Liberation Sans', sans-serif;">calls</div><div class="t" style="left:1000px;top:768.7px;font-size:12.5px;line-height:16px;color:#22d3ee;font-family:'Liberation Sans', sans-serif;">calls</div><div class="t" style="left:1033.6px;top:768.7px;font-size:12.5px;line-height:16px;color:#22d3ee;font-family:'Liberation Sans', sans-serif;">calls</div><div class="t" style="left:1132px;top:768.7px;font-size:12.5px;line-height:16px;color:#f97316;font-family:'Liberation Sans', sans-serif;">taint flows to</div><div class="r" style="left:468px;top:380px;width:163px;height:59px;background:#991b1b;border:1.5px solid #dc2626;border-radius:5px;box-sizing:border-box;"></div><div class="t" style="left:468px;top:388.9px;font-size:13px;line-height:17px;color:#f9fafb;font-family:'Liberation Mono', monospace;width:163px;text-align:center;">main</div><div class="t" style="left:468px;top:405.6px;font-size:11.5px;line-height:15px;color:#a8a29e;font-family:'Liberation Mono', monospace;width:163px;text-align:center;">0x00400b1a</div><div class="t" style="left:468px;top:420.8px;font-size:10.5px;line-height:14px;color:#fca5a5;font-family:'Liberation Sans', sans-serif;font-weight:700;width:163px;text-align:center;">[VULN]</div><div class="r" style="left:460px;top:530px;width:179px;height:60px;background:#2563eb;border:2px solid #22d3ee;border-radius:5px;box-sizing:border-box;"></div><div class="t" style="left:460px;top:538.9px;font-size:13px;line-height:17px;color:#f9fafb;font-family:'Liberation Mono', monospace;width:179px;text-align:center;">handle_http_request</div><div class="t" style="left:460px;top:555.6px;font-size:11.5px;line-height:15px;color:#a8a29e;font-family:'Liberation Mono', monospace;width:179px;text-align:center;">0x004009cc</div><div class="r" style="left:-50px;top:681px;width:163px;height:59px;background:#92400e;border:1.5px solid #f59e0b;border-radius:5px;box-sizing:border-box;"></div><div class="t" style="left:-50px;top:689.9px;font-size:13px;line-height:17px;color:#f9fafb;font-family:'Liberation Mono', monospace;width:163px;text-align:center;">.close</div><div class="t" style="left:-50px;top:706.6px;font-size:11.5px;line-height:15px;color:#a8a29e;font-family:'Liberation Mono', monospace;width:163px;text-align:center;">0x004003f0</div><div class="r" style="left:146.5px;top:681px;width:162.5px;height:59px;background:#164e63;border:1.5px solid #06b6d4;border-radius:5px;box-sizing:border-box;"></div><div class="t" style="left:146.5px;top:689.9px;font-size:13px;line-height:17px;color:#f9fafb;font-family:'Liberation Mono', monospace;width:162.5px;text-align:center;">.strcmp</div><div class="t" style="left:146.5px;top:706.6px;font-size:11.5px;line-height:15px;color:#a8a29e;font-family:'Liberation Mono', monospace;width:162.5px;text-align:center;">0x00400420</div><div class="r" style="left:343px;top:681px;width:162.5px;height:59px;background:#164e63;border:1.5px solid #06b6d4;border-radius:5px;box-sizing:border-box;"></div><div class="t" style="left:343px;top:689.9px;font-size:13px;line-height:17px;color:#f9fafb;font-family:'Liberation Mono', monospace;width:162.5px;text-align:center;">.strlen</div><div class="t" style="left:343px;top:706.6px;font-size:11.5px;line-height:15px;color:#a8a29e;font-family:'Liberation Mono', monospace;width:162.5px;text-align:center;">0x00400390</div><div class="r" style="left:539.5px;top:681px;width:162.5px;height:59px;background:#92400e;border:1.5px solid #f59e0b;border-radius:5px;box-sizing:border-box;"></div><div class="t" style="left:539.5px;top:689.9px;font-size:13px;line-height:17px;color:#f9fafb;font-family:'Liberation Mono', monospace;width:162.5px;text-align:center;">.write</div><div class="t" style="left:539.5px;top:706.6px;font-size:11.5px;line-height:15px;color:#a8a29e;font-family:'Liberation Mono', monospace;width:162.5px;text-align:center;">0x00400380</div><div class="r" style="left:736px;top:681px;width:177.5px;height:59px;background:#92400e;border:1.5px solid #f59e0b;border-radius:5px;box-sizing:border-box;"></div><div class="t" style="left:736px;top:689.9px;font-size:13px;line-height:17px;color:#f9fafb;font-family:'Liberation Mono', monospace;width:177.5px;text-align:center;">handle_echo_request</div><div class="t" style="left:736px;top:706.6px;font-size:11.5px;line-height:15px;color:#a8a29e;font-family:'Liberation Mono', monospace;width:177.5px;text-align:center;">0x004005c6</div><div class="r" style="left:948px;top:681px;width:201px;height:59px;background:#991b1b;border:1.5px solid #dc2626;border-radius:5px;box-sizing:border-box;"></div><div class="t" style="left:948px;top:689.9px;font-size:13px;line-height:17px;color:#f9fafb;font-family:'Liberation Mono', monospace;width:201px;text-align:center;">handle_http_ls_request</div><div class="t" style="left:948px;top:706.6px;font-size:11.5px;line-height:15px;color:#a8a29e;font-family:'Liberation Mono', monospace;width:201px;text-align:center;">0x004006c5</div><div class="t" style="left:948px;top:721.8px;font-size:10.5px;line-height:14px;color:#fca5a5;font-family:'Liberation Sans', sans-serif;font-weight:700;width:201px;text-align:center;">[VULN]</div><div class="r" style="left:-121px;top:831.5px;width:162.5px;height:58px;background:#92400e;border:1.5px solid #f59e0b;border-radius:5px;box-sizing:border-box;"></div><div class="t" style="left:-121px;top:840.4px;font-size:13px;line-height:17px;color:#f9fafb;font-family:'Liberation Mono', monospace;width:162.5px;text-align:center;">.recv</div><div class="t" style="left:-121px;top:857.1px;font-size:11.5px;line-height:15px;color:#a8a29e;font-family:'Liberation Mono', monospace;width:162.5px;text-align:center;">0x00400410</div><div class="r" style="left:75.6px;top:831.5px;width:162.5px;height:58px;background:#92400e;border:1.5px solid #f59e0b;border-radius:5px;box-sizing:border-box;"></div><div class="t" style="left:75.6px;top:840.4px;font-size:13px;line-height:17px;color:#f9fafb;font-family:'Liberation Mono', monospace;width:162.5px;text-align:center;">.pclose</div><div class="t" style="left:75.6px;top:857.1px;font-size:11.5px;line-height:15px;color:#a8a29e;font-family:'Liberation Mono', monospace;width:162.5px;text-align:center;">0x004003c0</div><div class="r" style="left:272px;top:831.5px;width:162.5px;height:58px;background:#991b1b;border:1.5px solid #dc2626;border-radius:5px;box-sizing:border-box;"></div><div class="t" style="left:272px;top:840.4px;font-size:13px;line-height:17px;color:#f9fafb;font-family:'Liberation Mono', monospace;width:162.5px;text-align:center;">.popen</div><div class="t" style="left:272px;top:857.1px;font-size:11.5px;line-height:15px;color:#a8a29e;font-family:'Liberation Mono', monospace;width:162.5px;text-align:center;">0x00400480</div><div class="t" style="left:272px;top:872.3px;font-size:10.5px;line-height:14px;color:#fca5a5;font-family:'Liberation Sans', sans-serif;font-weight:700;width:162.5px;text-align:center;">[VULN]</div><div class="r" style="left:468.5px;top:831.5px;width:162.5px;height:58px;background:#92400e;border:1.5px solid #f59e0b;border-radius:5px;box-sizing:border-box;"></div><div class="t" style="left:468.5px;top:840.4px;font-size:13px;line-height:17px;color:#f9fafb;font-family:'Liberation Mono', monospace;width:162.5px;text-align:center;">.read</div><div class="t" style="left:468.5px;top:857.1px;font-size:11.5px;line-height:15px;color:#a8a29e;font-family:'Liberation Mono', monospace;width:162.5px;text-align:center;">0x00400400</div><div class="r" style="left:665px;top:831.5px;width:162.5px;height:58px;background:#164e63;border:1.5px solid #06b6d4;border-radius:5px;box-sizing:border-box;"></div><div class="t" style="left:665px;top:840.4px;font-size:13px;line-height:17px;color:#f9fafb;font-family:'Liberation Mono', monospace;width:162.5px;text-align:center;">.snprintf</div><div class="t" style="left:665px;top:857.1px;font-size:11.5px;line-height:15px;color:#a8a29e;font-family:'Liberation Mono', monospace;width:162.5px;text-align:center;">0x004003d0</div><div class="r" style="left:862px;top:831.5px;width:162.5px;height:58px;background:#92400e;border:1.5px solid #f59e0b;border-radius:5px;box-sizing:border-box;"></div><div class="t" style="left:862px;top:840.4px;font-size:13px;line-height:17px;color:#f9fafb;font-family:'Liberation Mono', monospace;width:162.5px;text-align:center;">.stat</div><div class="t" style="left:862px;top:857.1px;font-size:11.5px;line-height:15px;color:#a8a29e;font-family:'Liberation Mono', monospace;width:162.5px;text-align:center;">0x00400440</div><div class="r" style="left:1058.5px;top:831.5px;width:162.5px;height:58px;background:#164e63;border:1.5px solid #06b6d4;border-radius:5px;box-sizing:border-box;"></div><div class="t" style="left:1058.5px;top:840.4px;font-size:13px;line-height:17px;color:#f9fafb;font-family:'Liberation Mono', monospace;width:162.5px;text-align:center;">.strstr</div><div class="t" style="left:1058.5px;top:857.1px;font-size:11.5px;line-height:15px;color:#a8a29e;font-family:'Liberation Mono', monospace;width:162.5px;text-align:center;">0x00400460</div></div>
<div class="r" style="left:355px;top:79px;width:156px;height:58px;background:rgba(17,24,39,0.9);border:1px solid #1f2937;box-sizing:border-box;"></div>
<div class="t" style="left:370px;top:89px;font-size:14.5px;line-height:18px;color:#9ca3af;font-family:'Liberation Sans', sans-serif;">19 functions shown</div>
<div class="t" style="left:370px;top:107px;font-size:14.5px;line-height:18px;color:#9ca3af;font-family:'Liberation Sans', sans-serif;">Depth: 4 levels</div>
<div class="t" style="left:356px;top:1422px;font-size:15px;line-height:19px;color:#4b5563;font-family:'Liberation Sans', sans-serif;">Drag to pan, scroll to zoom, double-click to focus</div>
<div class="r" style="left:1420px;top:1313px;width:37px;height:37px;background:#1f2937;border:1px solid #374151;border-radius:5px;box-sizing:border-box;"></div>
<div class="r" style="left:1420px;top:1359px;width:37px;height:37px;background:#1f2937;border:1px solid #374151;border-radius:5px;box-sizing:border-box;"></div>
<div class="r" style="left:1420px;top:1406px;width:37px;height:37px;background:#1f2937;border:1px solid #374151;border-radius:5px;box-sizing:border-box;"></div>
<svg class="r" style="left:1420px;top:1313px;width:37px;height:130px" viewBox="0 0 37 130"><path d="M13.6 19.6 H23.4 M18.5 14.7 V24.5" stroke="#fff" stroke-width="1.4"/><path d="M15 65.4 H22" stroke="#fff" stroke-width="1.5"/><g stroke="#fff" stroke-width="1.6" fill="none"><path d="M13.5 105 L17 108.5 M13.5 105 V108 M13.5 105 H16.5"/><path d="M24 105 L20.5 108.5 M24 105 V108 M24 105 H21"/><path d="M13.5 116 L17 112.5 M13.5 116 V113 M13.5 116 H16.5"/><path d="M24 116 L20.5 112.5 M24 116 V113 M24 116 H21"/></g></svg>
<style>.c{font-family:'Liberation Mono', monospace;font-weight:700;font-size:13.6px;color:#22d3ee;background:#1f2937;border-radius:4px;padding:0 6px 0.5px 6px;}</style>
<div class="t" style="left:1500px;top:80px;font-size:18.5px;line-height:24px;color:#f9fafb;font-family:'Liberation Sans', sans-serif;font-weight:700;">Node Details</div>
<svg class="r" style="left:1957px;top:86px;width:17px;height:16px" viewBox="0 0 17 16"><path d="M2 1.2 L15.3 14.4 M15.3 1.2 L2 14.4" stroke="#9ca3af" stroke-width="1.7" stroke-linecap="round"/></svg>
<div class="r" style="left:1481px;top:126px;width:513px;height:1px;background:#1f2937;"></div>
<div class="r" style="left:1499px;top:145px;width:73px;height:28px;background:#113246;border-radius:5px;"></div>
<div class="t" style="left:1509px;top:148px;font-size:15px;line-height:19px;color:#22d3ee;font-family:'Liberation Sans', sans-serif;">function</div>
<div class="r" style="left:1902px;top:145px;width:76px;height:28px;background:#3c3120;border-radius:5px;"></div>
<div class="t" style="left:1911px;top:149px;font-size:14.2px;line-height:19px;color:#facc15;font-family:'Liberation Sans', sans-serif;">MEDIUM</div>
<div class="t" style="left:1500px;top:193px;font-size:13.4px;line-height:17px;color:#6b7280;font-family:'Liberation Sans', sans-serif;">NAME</div>
<div class="t" style="left:1500px;top:215px;font-size:16px;line-height:20px;color:#f3f4f6;font-family:'Liberation Mono', monospace;">handle_http_request</div>
<div class="t" style="left:1500px;top:257px;font-size:13.4px;line-height:17px;color:#6b7280;font-family:'Liberation Sans', sans-serif;">ADDRESS</div>
<div class="t" style="left:1500px;top:280px;font-size:16px;line-height:20px;color:#22d3ee;font-family:'Liberation Mono', monospace;">0x004009CC</div>
<div class="t" style="left:1500px;top:316px;font-size:13.4px;line-height:17px;color:#6b7280;font-family:'Liberation Sans', sans-serif;">VERSION</div>
<div class="t" style="left:1746px;top:316px;font-size:13.4px;line-height:17px;color:#6b7280;font-family:'Liberation Sans', sans-serif;">CONFIDENCE</div>
<div class="t" style="left:1500px;top:333px;font-size:15px;line-height:19px;color:#e5e7eb;font-family:'Liberation Sans', sans-serif;">v1</div>
<div class="t" style="left:1746px;top:333px;font-size:15px;line-height:19px;color:#e5e7eb;font-family:'Liberation Sans', sans-serif;">85%</div>
<div class="t" style="left:1500px;top:367px;font-size:13.4px;line-height:17px;color:#6b7280;font-family:'Liberation Sans', sans-serif;">PROVENANCE</div>
<div class="t" style="left:1746px;top:367px;font-size:13.4px;line-height:17px;color:#6b7280;font-family:'Liberation Sans', sans-serif;">DEPTH</div>
<div class="t" style="left:1500px;top:384px;font-size:15px;line-height:19px;color:#e5e7eb;font-family:'Liberation Sans', sans-serif;">llm</div>
<div class="t" style="left:1746px;top:384px;font-size:15px;line-height:19px;color:#e5e7eb;font-family:'Liberation Sans', sans-serif;">0</div>
<div class="r" style="left:1481px;top:423px;width:513px;height:1px;background:#1f2937;"></div>
<div class="t" style="left:1500px;top:442px;font-size:13.4px;line-height:17px;color:#6b7280;font-family:'Liberation Sans', sans-serif;">SUMMARY</div>
<div class="t" style="left:1500px;top:471px;font-size:17px;line-height:22px;color:#d1d5db;font-family:'Liberation Sans', sans-serif;">Summary</div>
<div class="t" style="left:1500px;top:497.5px;font-size:17.4px;line-height:23px;color:#d1d5db;font-family:'Liberation Sans', sans-serif;"><span class="c">`handle_http_request`</span> is the main per-connection HTTP</div>
<div class="t" style="left:1500px;top:523.6px;font-size:17.4px;line-height:23px;color:#d1d5db;font-family:'Liberation Sans', sans-serif;">dispatcher for a very small web server. It parses the request</div>
<div class="t" style="left:1500px;top:546.2px;font-size:17.4px;line-height:23px;color:#d1d5db;font-family:'Liberation Sans', sans-serif;">line from the raw HTTP request buffer, extracts the HTTP</div>
<div class="t" style="left:1500px;top:569.6px;font-size:17.4px;line-height:23px;color:#d1d5db;font-family:'Liberation Sans', sans-serif;">method and path, and routes the request to one of three</div>
<div class="t" style="left:1500px;top:592.8px;font-size:17.4px;line-height:23px;color:#d1d5db;font-family:'Liberation Sans', sans-serif;">handlers based on simple string comparisons: <span class="c">`POST /echo`</span></div>
<div class="t" style="left:1500px;top:618.3px;font-size:17.4px;line-height:23px;color:#d1d5db;font-family:'Liberation Sans', sans-serif;">goes to <span class="c">`handle_echo_request`</span>, <span class="c">`POST /dir`</span> goes to</div>
<div class="t" style="left:1500px;top:644.7px;font-size:17.4px;line-height:23px;color:#d1d5db;font-family:'Liberation Sans', sans-serif;"><span class="c">`handle_http_ls_request`</span>, and any <span class="c">`GET`</span> request is passed</div>
<div class="t" style="left:1500px;top:670.2px;font-size:17.4px;line-height:23px;color:#d1d5db;font-family:'Liberation Sans', sans-serif;">to <span class="c">`serve_static_file`</span> using the supplied base directory</div>
<div class="t" style="left:1500px;top:696.6px;font-size:17.4px;line-height:23px;color:#d1d5db;font-family:'Liberation Sans', sans-serif;">and parsed path. If none of those cases match, it returns a</div>
<div class="t" style="left:1500px;top:720.5px;font-size:17.4px;line-height:23px;color:#d1d5db;font-family:'Liberation Sans', sans-serif;"><span class="c">`405 Method Not Allowed`</span> response and closes the client</div>
<div class="t" style="left:1500px;top:746.0px;font-size:17.4px;line-height:23px;color:#d1d5db;font-family:'Liberation Sans', sans-serif;">socket. The function appears to implement minimal HTTP</div>
<div class="t" style="left:1500px;top:769.1px;font-size:17.4px;line-height:23px;color:#d1d5db;font-family:'Liberation Sans', sans-serif;">routing rather than full protocol validation, and its parsing</div>
<div class="t" style="left:1500px;top:792.2px;font-size:17.4px;line-height:23px;color:#d1d5db;font-family:'Liberation Sans', sans-serif;">strategy suggests several robustness and security concerns.</div>
<div class="t" style="left:1500px;top:827px;font-size:23.5px;line-height:28px;color:#e5e7eb;font-family:'Liberation Sans', sans-serif;font-weight:700;">Analysis</div>
<div class="t" style="left:1500px;top:868px;font-size:20.8px;line-height:25px;color:#e5e7eb;font-family:'Liberation Sans', sans-serif;font-weight:700;">Likely purpose and name</div>
<div class="t" style="left:1500px;top:908.5px;font-size:17.4px;line-height:23px;color:#d1d5db;font-family:'Liberation Sans', sans-serif;">The supplied name <span class="c">`handle_http_request`</span> is consistent with</div>
<div class="t" style="left:1500px;top:934.8px;font-size:17.4px;line-height:23px;color:#d1d5db;font-family:'Liberation Sans', sans-serif;">the code's behavior and is likely accurate. This function acts</div>
<div class="t" style="left:1500px;top:957.9px;font-size:17.4px;line-height:23px;color:#d1d5db;font-family:'Liberation Sans', sans-serif;">as a request router or dispatcher for the server.</div>
<div class="t" style="left:1500px;top:992px;font-size:21.2px;line-height:25px;color:#e5e7eb;font-family:'Liberation Sans', sans-serif;font-weight:700;">High-level behavior</div>
<div class="t" style="left:1500px;top:1032px;font-size:17.4px;line-height:23px;color:#d1d5db;font-family:'Liberation Sans', sans-serif;">The function takes:</div>
<div class="r" style="left:1508px;top:1069.9px;width:5px;height:5px;border-radius:50%;background:#6b7280"></div>
<div class="t" style="left:1532px;top:1059.4px;font-size:17.4px;line-height:23px;color:#d1d5db;font-family:'Liberation Sans', sans-serif;"><span class="c">`client_fd`</span>: a client socket/file descriptor</div>
<div class="r" style="left:1508px;top:1096.2px;width:5px;height:5px;border-radius:50%;background:#6b7280"></div>
<div class="t" style="left:1532px;top:1085.7px;font-size:17.4px;line-height:23px;color:#d1d5db;font-family:'Liberation Sans', sans-serif;"><span class="c">`base_directory`</span>: root directory for static file serving</div>
<div class="r" style="left:1508px;top:1121.8px;width:5px;height:5px;border-radius:50%;background:#6b7280"></div>
<div class="t" style="left:1532px;top:1111.3px;font-size:17.4px;line-height:23px;color:#d1d5db;font-family:'Liberation Sans', sans-serif;"><span class="c">`http_request`</span>: pointer to the raw HTTP request text</div>
<div class="t" style="left:1500px;top:1142.6px;font-size:17.4px;line-height:23px;color:#d1d5db;font-family:'Liberation Sans', sans-serif;">It then:</div>
<div class="t" style="left:1506px;top:1169.8px;font-size:17.4px;line-height:23px;color:#9ca3af;font-family:'Liberation Sans', sans-serif;">1.</div>
<div class="t" style="left:1532px;top:1169.8px;font-size:17.4px;line-height:23px;color:#d1d5db;font-family:'Liberation Sans', sans-serif;">Parses the first three whitespace-delimited tokens from</div>
<div class="t" style="left:1532px;top:1192.9px;font-size:17.4px;line-height:23px;color:#d1d5db;font-family:'Liberation Sans', sans-serif;">the request.</div>
<div class="t" style="left:1506px;top:1216.3px;font-size:17.4px;line-height:23px;color:#9ca3af;font-family:'Liberation Sans', sans-serif;">2.</div>
<div class="t" style="left:1532px;top:1216.3px;font-size:17.4px;line-height:23px;color:#d1d5db;font-family:'Liberation Sans', sans-serif;">Treats them as:</div>
<div class="r" style="left:1540px;top:1253.6px;width:5px;height:5px;border-radius:50%;background:#6b7280"></div>
<div class="t" style="left:1564px;top:1243.1px;font-size:17.4px;line-height:23px;color:#d1d5db;font-family:'Liberation Sans', sans-serif;">HTTP method</div>
<div class="r" style="left:1540px;top:1277.5px;width:5px;height:5px;border-radius:50%;background:#6b7280"></div>
<div class="t" style="left:1564px;top:1267px;font-size:17.4px;line-height:23px;color:#d1d5db;font-family:'Liberation Sans', sans-serif;">request path</div>
<div class="r" style="left:1540px;top:1301.4px;width:5px;height:5px;border-radius:50%;background:#6b7280"></div>
<div class="t" style="left:1564px;top:1290.9px;font-size:17.4px;line-height:23px;color:#d1d5db;font-family:'Liberation Sans', sans-serif;">HTTP version</div>
<div class="t" style="left:1506px;top:1318px;font-size:17.4px;line-height:23px;color:#9ca3af;font-family:'Liberation Sans', sans-serif;">3.</div>
<div class="t" style="left:1532px;top:1318px;font-size:17.4px;line-height:23px;color:#d1d5db;font-family:'Liberation Sans', sans-serif;">Routes the request according to a small set of hard-coded</div>
<div class="t" style="left:1532px;top:1341.2px;font-size:17.4px;line-height:23px;color:#d1d5db;font-family:'Liberation Sans', sans-serif;">rules.</div>
<div class="t" style="left:1506px;top:1364.4px;font-size:17.4px;line-height:23px;color:#9ca3af;font-family:'Liberation Sans', sans-serif;">4.</div>
<div class="t" style="left:1532px;top:1364.4px;font-size:17.4px;line-height:23px;color:#d1d5db;font-family:'Liberation Sans', sans-serif;">Sends a <span class="c">`405`</span> response for unsupported</div>
<div class="t" style="left:1532px;top:1390.1px;font-size:17.4px;line-height:23px;color:#d1d5db;font-family:'Liberation Sans', sans-serif;">methods/routes.</div>
<div class="t" style="left:1500px;top:1423px;font-size:21px;line-height:25px;color:#e5e7eb;font-family:'Liberation Sans', sans-serif;font-weight:700;">Parsing logic</div>
</body></html>
